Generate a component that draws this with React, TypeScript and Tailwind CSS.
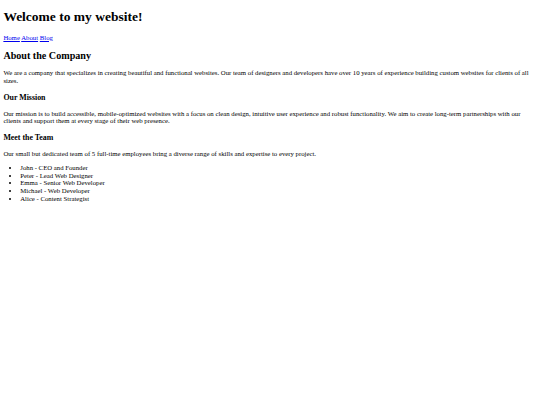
// the page is drawn at 1280px wide and shrunk to the 540px window
export default function App() {
	const team = [
		"John - CEO and Founder",
		"Peter - Lead Web Designer",
		"Emma - Senior Web Developer",
		"Michael - Web Developer",
		"Alice - Content Strategist",
	];

	return (
		<div className="min-h-screen bg-white">
			<div className="[zoom:0.421875] w-[1280px] flow-root px-[8px] text-black text-[16px] leading-[18px] font-['Liberation_Serif','Times_New_Roman',serif]">
				<h1 className="text-[32px] leading-[37px] font-bold my-[21.44px]">Welcome to my website!</h1>

				<p className="my-[16px]">
					<a href="#" className="text-[#0000ee] underline">Home</a>{" "}
					<a href="#" className="text-[#0000ee] underline">About</a>{" "}
					<a href="#" className="text-[#0000ee] underline">Blog</a>
				</p>

				<h2 className="text-[24px] leading-[27px] font-bold my-[19.92px]">About the Company</h2>
				<p className="my-[16px]">
					We are a company that specializes in creating beautiful and functional websites. Our team of
					designers and developers have over 10 years of experience building custom websites for clients
					of all sizes.
				</p>

				<h3 className="text-[18.72px] leading-[22px] font-bold my-[18.72px]">Our Mission</h3>
				<p className="my-[16px]">
					Our mission is to build accessible, mobile-optimized websites with a focus on clean design,
					intuitive user experience and robust functionality. We aim to create long-term partnerships with
					our clients and support them at every stage of their web presence.
				</p>

				<h3 className="text-[18.72px] leading-[22px] font-bold my-[18.72px]">Meet the Team</h3>
				<p className="my-[16px]">
					Our small but dedicated team of 5 full-time employees bring a diverse range of skills and
					expertise to every project.
				</p>

				<ul className="my-[16px] pl-[40px] list-disc">
					{team.map((m) => (
						<li key={m}>{m}</li>
					))}
				</ul>
			</div>
		</div>
	);
}
